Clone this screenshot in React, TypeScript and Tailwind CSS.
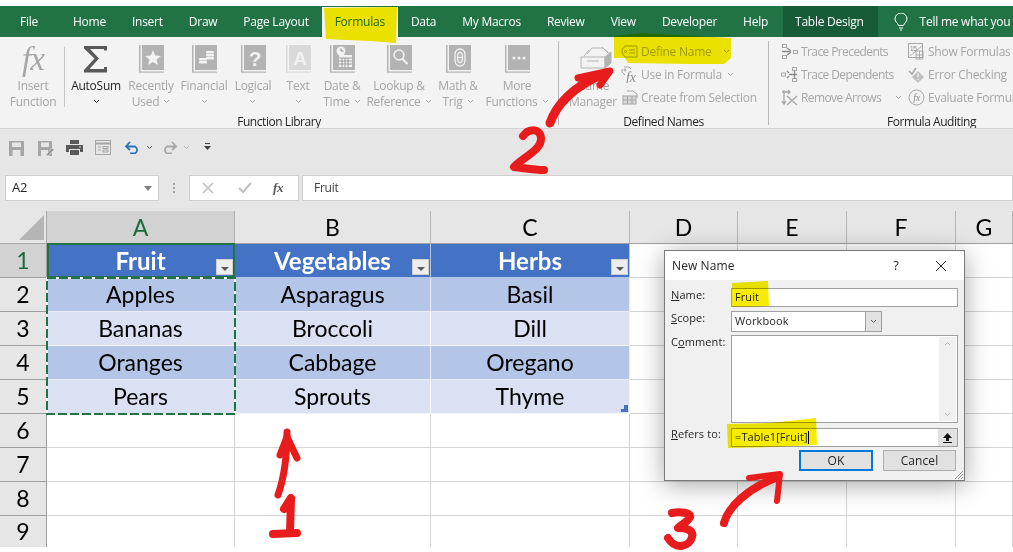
import React from "react";

const GRAY = "#a6a6a6";

function Caret({ className = "" }: { className?: string }) {
  return (
    <svg width="7" height="5" viewBox="0 0 7 5" fill="none" stroke="currentColor" strokeWidth="1" className={`inline-block ${className}`}>
      <path d="M1 1l2.5 2.5L6 1" />
    </svg>
  );
}

function Book({ children, light = false }: { children?: React.ReactNode; light?: boolean }) {
  const c = light ? "#d9d9d9" : "#b3b3b3";
  return (
    <svg width="25" height="29" viewBox="0 0 25 29">
      <rect x="0" y="0" width="1.5" height="27" fill={c} />
      <rect x="3" y="0" width="22" height="25" fill={c} />
      <rect x="0" y="26.5" width="25" height="1.2" fill={c} />
      {children}
    </svg>
  );
}

function Sigma() {
  return (
    <svg width="26" height="28" viewBox="0 0 26 28">
      <path d="M1 1h23v4.500h-3V4H7l9 9.500L6.500 24H21v-2h3v5.500H1v-2.500l10.500-11.500L1 3.500z" fill="#595959" />
    </svg>
  );
}

const star = <polygon points="14,5 16.200,10.500 22,11 17.500,14.500 19,20 14,17 9,20 10.500,14.500 6,11 11.800,10.500" fill="#f2f2f2" />;
const coins = (
  <g fill="#f2f2f2">
    <rect x="14" y="6" width="8" height="2.500" rx="1" />
    <rect x="14" y="9" width="8" height="2.500" rx="1" />
    <rect x="14" y="12" width="8" height="2.500" rx="1" />
    <rect x="7" y="13" width="8" height="2.500" rx="1" />
    <rect x="7" y="16" width="8" height="2.500" rx="1" />
  </g>
);
const question = <text x="14" y="21" textAnchor="middle" fontSize="21" fontWeight="700" fontFamily="Liberation Sans" fill="#f2f2f2">?</text>;
const letterA = <text x="14" y="20" textAnchor="middle" fontSize="19" fontWeight="700" fontFamily="Liberation Sans" fill="#f2f2f2">A</text>;
const calendar = (
  <g>
    <circle cx="11" cy="6" r="4.500" fill="#f2f2f2" />
    <path d="M11 3.500V6h2.500" stroke="#8c8c8c" fill="none" />
    <rect x="9" y="10" width="13" height="12" fill="#f2f2f2" />
    <path d="M9 13h13M9 16h13M9 19h13M12 13v9M15 13v9M18 13v9" stroke="#8c8c8c" strokeWidth="0.800" />
  </g>
);
const lens = (
  <g fill="none" stroke="#f2f2f2">
    <circle cx="12" cy="10" r="5" strokeWidth="1.500" />
    <path d="M15.500 14l5 5" strokeWidth="2" />
  </g>
);
const theta = (
  <g fill="none" stroke="#f2f2f2" strokeWidth="1.300">
    <rect x="9" y="4" width="10" height="17" rx="5" />
    <ellipse cx="14" cy="12.500" rx="2.500" ry="5" />
    <path d="M11.500 12.500h5" />
  </g>
);
const dots = (
  <g fill="#f2f2f2">
    <circle cx="9" cy="13" r="1.500" />
    <circle cx="14" cy="13" r="1.500" />
    <circle cx="19" cy="13" r="1.500" />
  </g>
);

function BigButton({ icon, line1, line2, caret, className, dark }: { icon: React.ReactNode; line1: string; line2?: string; caret?: boolean; className: string; dark?: boolean }) {
  return (
    <div className={`flex flex-col items-center shrink-0 ${className} ${dark ? "text-[#262626]" : "text-[#a6a6a6]"}`}>
      <div className="h-[33px] flex items-start justify-center">{icon}</div>
      <div className="whitespace-nowrap leading-[15.500px] text-center">
        <div>{line1}</div>
        <div className="flex items-center justify-center gap-[4px] h-[15.500px]">
          {line2 && <span>{line2}</span>}
          {caret && <Caret className="mt-[1px]" />}
        </div>
      </div>
    </div>
  );
}

function SmallButton({ icon, label, caret, gap = "gap-[3px]" }: { icon: React.ReactNode; label: string; caret?: React.ReactNode; gap?: string }) {
  return (
    <div className={`h-[23px] flex items-center whitespace-nowrap text-[#a6a6a6] ${gap}`}>
      <span className="w-[17px] h-[17px] flex items-center justify-center shrink-0">{icon}</span>
      <span>{label}</span>
      {caret}
    </div>
  );
}

const ic = { fill: "none", stroke: GRAY, strokeWidth: 1 };

const defineIcon = (
  <svg width="17" height="13" viewBox="0 0 17 13" {...ic}>
    <path d="M4 1h12v11H4L1 8V5z" />
    <circle cx="4.500" cy="6.500" r="1" />
    <path d="M8 5h6M8 8h6" />
  </svg>
);
const useIcon = (
  <svg width="17" height="17" viewBox="0 0 17 17" fill="none">
    <path d="M3 1h5l2 2M1 3v3l3 3" stroke={GRAY} />
    <circle cx="4" cy="4" r="1" stroke={GRAY} />
    <text x="5" y="16" fontSize="14" fontStyle="italic" fontFamily="Liberation Serif" fill="#8c8c8c">fx</text>
  </svg>
);
const createIcon = (
  <svg width="16" height="15" viewBox="0 0 16 15" {...ic}>
    <path d="M5 1h6l4 3v4" />
    <rect x="1" y="6" width="13" height="8" fill="#d9d9d9" />
    <path d="M1 10h13M5.500 6v8M10 6v8" />
  </svg>
);
const precedentsIcon = (
  <svg width="17" height="17" viewBox="0 0 17 17" {...ic}>
    <rect x="1.500" y="1.500" width="4" height="3" />
    <rect x="1.500" y="12.500" width="4" height="3" />
    <rect x="12.500" y="7.500" width="4" height="3" />
    <path d="M1 8.500h8M6 5l4 3M6 12l4-3" stroke="#8c8c8c" strokeWidth="1.300" />
  </svg>
);
const dependentsIcon = (
  <svg width="17" height="17" viewBox="0 0 17 17" {...ic}>
    <rect x="11.500" y="1.500" width="4" height="3" />
    <rect x="11.500" y="12.500" width="4" height="3" />
    <rect x="0.500" y="7" width="4" height="3" />
    <path d="M8 8.500h8M13.500 5v8M6 5l2 2M6 12l2-2" stroke="#8c8c8c" strokeWidth="1.300" />
  </svg>
);
const removeIcon = (
  <svg width="17" height="17" viewBox="0 0 17 17" fill="none" stroke={GRAY} strokeWidth="1.300">
    <path d="M3 1v13M1 12l2 3 2-3M1 3h8M7 1l2 2-2 2" />
    <path d="M6 7l10 9M16 7L6 16" />
  </svg>
);
const showIcon = (
  <svg width="17" height="17" viewBox="0 0 17 17" fill="none" stroke={GRAY}>
    <rect x="0.500" y="0.500" width="14" height="14" />
    <path d="M2 13L15 2M8 8h7v8H8zM8 12h7M11.500 8v8" strokeWidth="0.900" />
    <text x="2" y="7.500" fontSize="6.500" stroke="none" fill="#8c8c8c" fontFamily="Liberation Sans">15</text>
  </svg>
);
const errorIcon = (
  <svg width="17" height="16" viewBox="0 0 17 16" fill="none">
    <path d="M1 4l3 3 4-6" stroke={GRAY} strokeWidth="1.500" />
    <path d="M10 4l6 6-6 6-6-6z" fill="#bfbfbf" />
    <path d="M10 6.500v4M10 12v1.200" stroke="#f3f3f3" strokeWidth="1.300" />
  </svg>
);
const evalIcon = (
  <svg width="17" height="17" viewBox="0 0 17 17" fill="none">
    <circle cx="8.500" cy="8.500" r="7.500" stroke={GRAY} />
    <text x="8.500" y="12" textAnchor="middle" fontSize="10" fontStyle="italic" fontFamily="Liberation Serif" fill="#8c8c8c">fx</text>
  </svg>
);
const managerIcon = (
  <svg width="32" height="24" viewBox="0 0 32 24" fill="none" stroke="#b3b3b3">
    <path d="M7 8l5-6h11l5 5M4 10l5-6M22 1l8 7" />
    <path d="M1 11h24v11H1z" fill="#f3f3f3" />
    <path d="M7 15h12" />
    <path d="M25 11l6-5v11l-6 5z" fill="#b3b3b3" />
  </svg>
);

function Ribbon() {
  return (
    <div className="h-[92px] bg-[#f3f3f3] border-b border-[#d2d2d2] flex overflow-hidden text-[12px] shrink-0">
      <div className="w-[558px] shrink-0 flex flex-col">
        <div className="h-[77px] pt-[8px] pl-[3px] flex">
          <BigButton
            className="w-[60px]"
            icon={<span className="font-['Liberation_Serif'] italic text-[33px] leading-[29px] text-[#a6a6a6] tracking-[-1px]">fx</span>}
            line1="Insert"
            line2="Function"
          />
          <div className="w-[3px] flex justify-center shrink-0 mt-[2px] h-[60px]">
            <div className="w-px h-full bg-[#c6c6c6]" />
          </div>
          <BigButton dark className="w-[60px]" icon={<Sigma />} line1="AutoSum" caret />
          <BigButton className="w-[50px]" icon={<Book>{star}</Book>} line1="Recently" line2="Used" caret />
          <BigButton className="w-[56px]" icon={<Book>{coins}</Book>} line1="Financial" caret />
          <BigButton className="w-[42px]" icon={<Book>{question}</Book>} line1="Logical" caret />
          <BigButton className="w-[48px]" icon={<Book light>{letterA}</Book>} line1="Text" caret />
          <BigButton className="w-[40px]" icon={<Book>{calendar}</Book>} line1="Date &" line2="Time" caret />
          <BigButton className="w-[74px]" icon={<Book>{lens}</Book>} line1="Lookup &" line2="Reference" caret />
          <BigButton className="w-[44px]" icon={<Book>{theta}</Book>} line1="Math &" line2="Trig" caret />
          <BigButton className="w-[74px]" icon={<Book>{dots}</Book>} line1="More" line2="Functions" caret />
        </div>
        <div className="h-[14px] leading-[15px] text-center text-[#262626] tracking-[-0.45px]">Function Library</div>
      </div>
      <div className="w-px h-[84px] mt-[4px] bg-[#b8b8b8] shrink-0" />
      <div className="w-[209px] shrink-0 flex flex-col">
        <div className="h-[77px] pt-[3px] flex">
          <div className="ml-[9px] w-[50px] pt-[7px] flex flex-col items-center text-[#a6a6a6] shrink-0">
            <div className="h-[29px] flex items-start pl-[5px] -mt-[1px]">{managerIcon}</div>
            <div className="leading-[15.500px] whitespace-nowrap text-center pt-[3px]">
              <div>Name</div>
              <div>Manager</div>
            </div>
          </div>
          <div className="ml-[3px] flex flex-col">
            <SmallButton icon={defineIcon} label="Define Name" caret={<Caret className="ml-[8px]" />} />
            <SmallButton icon={useIcon} label="Use in Formula" caret={<Caret className="ml-[2px]" />} />
            <SmallButton icon={createIcon} label="Create from Selection" />
          </div>
        </div>
        <div className="h-[14px] leading-[15px] text-center text-[#262626] tracking-[-0.45px]">Defined Names</div>
      </div>
      <div className="w-px h-[84px] mt-[4px] bg-[#b8b8b8] shrink-0" />
      <div className="w-[325px] shrink-0 flex flex-col">
        <div className="h-[77px] pt-[3px] pl-[12px] flex">
          <div className="w-[127px] shrink-0 flex flex-col tracking-[-0.6px]">
            <SmallButton icon={precedentsIcon} label="Trace Precedents" />
            <SmallButton icon={dependentsIcon} label="Trace Dependents" />
            <SmallButton icon={removeIcon} label="Remove Arrows" caret={<Caret className="ml-[11px]" />} />
          </div>
          <div className="flex flex-col">
            <SmallButton icon={showIcon} label="Show Formulas" />
            <SmallButton icon={errorIcon} label="Error Checking" />
            <SmallButton icon={evalIcon} label="Evaluate Formula" />
          </div>
        </div>
        <div className="h-[14px] leading-[15px] text-center text-[#262626] tracking-[-0.45px]">Formula Auditing</div>
      </div>
    </div>
  );
}

function Tabs() {
  const tabs = ["Home", "Insert", "Draw", "Page Layout", "Formulas", "Data", "My Macros", "Review", "View", "Developer", "Help"];
  return (
    <div className="mt-[6px] h-[31px] bg-[#217346] flex items-center text-white text-[12px] pl-[20px] shrink-0 overflow-hidden whitespace-nowrap">
      <div className="h-full flex items-center mr-[22px]">File</div>
      {tabs.map((t) => (
        <div key={t} className={`h-full flex items-center px-[13px] ${t === "Formulas" ? "text-[#217346] bg-[#f3f3f3] mt-[1px]" : ""}`}>
          {t}
        </div>
      ))}
      <div className="ml-[2px] h-full flex items-center pl-[12px] pr-[14px] bg-[#185c37]">Table Design</div>
      <svg width="14" height="18" viewBox="0 0 14 18" fill="none" stroke="white" className="ml-[16px] shrink-0">
        <path d="M4.500 12.500C4 10 1 9 1 6a6 6 0 0 1 12 0c0 3-3 4-3.500 6.500z" />
        <path d="M5 15h4M6 17h2" />
      </svg>
      <span className="ml-[12px]">Tell me what you want to do</span>
    </div>
  );
}

function QuickAccess() {
  return (
    <div className="h-[36px] flex items-center pl-[9px] shrink-0">
      <svg width="15" height="15" viewBox="0 0 15 15" fill="#a6a6a6" className="mt-[2px]">
        <path d="M0 0h15v15H0z" />
        <path d="M3 1.500h9v4.500H3zM3.500 9h8v6h-8z" fill="#e6e6e6" />
      </svg>
      <svg width="16" height="15" viewBox="0 0 16 15" fill="#a6a6a6" className="ml-[14px] mt-[2px]">
        <path d="M0 0h14v15H0z" />
        <path d="M3 1.500h8v4.500H3zM3 9h7v6H3z" fill="#e6e6e6" />
        <path d="M8 14l6-7 2 1.500-6 6.500z" fill="#8c8c8c" stroke="#e6e6e6" strokeWidth="0.700" />
      </svg>
      <svg width="17" height="15" viewBox="0 0 17 15" fill="#595959" className="ml-[12px]">
        <path d="M4 0h9v4H4zM0 5h17v7h-3V9H3v3H0zM4 10h9v5H4z" />
        <circle cx="14" cy="7" r="0.800" fill="#e6e6e6" />
      </svg>
      <svg width="16" height="15" viewBox="0 0 16 15" fill="none" stroke="#a6a6a6" className="ml-[12px]">
        <rect x="0.500" y="0.500" width="15" height="14" />
        <path d="M1 3.500h14" strokeWidth="2" />
        <path d="M3 7h3M3 10h3M8 6.500h5v2H8zM8 10h5v2H8z" />
      </svg>
      <svg width="15" height="13" viewBox="0 0 15 13" fill="none" stroke="#2e75b6" strokeWidth="1.800" className="ml-[14px]">
        <path d="M1 5.500h9a4 4 0 0 1 0 7H5M5 1L1 5.500 5 9" />
      </svg>
      <Caret className="ml-[6px] text-[#595959]" />
      <svg width="15" height="13" viewBox="0 0 15 13" fill="none" stroke="#a6a6a6" strokeWidth="1.800" className="ml-[9px]">
        <path d="M14 5.500H5a4 4 0 0 0 0 7h5M10 1l4 4.500L10 9" />
      </svg>
      <Caret className="ml-[6px] text-[#b3b3b3]" />
      <svg width="7" height="8" viewBox="0 0 7 8" className="ml-[14px]" fill="#404040">
        <path d="M1 0h5v1H1zM0 3h7L3.500 7z" />
      </svg>
    </div>
  );
}

function FormulaBar() {
  return (
    <div className="h-[26px] mt-[10px] flex pl-[5px] shrink-0 font-['Liberation_Sans'] text-[12px]">
      <div className="w-[154px] bg-white border border-[#cfcfcf] flex items-center justify-between pl-[6px] pr-[6px] text-[#262626] font-['Open_Sans'] text-[13px]">
        <span>A2</span>
        <span className="w-0 h-0 border-l-[4px] border-r-[4px] border-t-[5px] border-l-transparent border-r-transparent border-t-[#7f7f7f]" />
      </div>
      <div className="w-[30px] flex flex-col gap-[2px] items-center justify-center">
        <span className="w-[2px] h-[2px] bg-[#a6a6a6]" />
        <span className="w-[2px] h-[2px] bg-[#a6a6a6]" />
        <span className="w-[2px] h-[2px] bg-[#a6a6a6]" />
      </div>
      <div className="w-[110px] bg-white border border-[#cfcfcf] flex items-center">
        <svg width="12" height="12" viewBox="0 0 12 12" stroke="#bfbfbf" strokeWidth="1.500" className="ml-[12px]">
          <path d="M1 1l10 10M11 1L1 11" />
        </svg>
        <svg width="14" height="12" viewBox="0 0 14 12" fill="none" stroke="#bfbfbf" strokeWidth="2" className="ml-[24px]">
          <path d="M1 6l4 4 8-9" />
        </svg>
        <span className="ml-[21px] font-['Liberation_Serif'] italic text-[13px] font-bold text-[#595959]">fx</span>
      </div>
      <div className="ml-[3px] flex-1 bg-white border border-[#cfcfcf] flex items-center pl-[11px] text-[#404040] font-['Open_Sans']">Fruit</div>
    </div>
  );
}

function Dropdown() {
  return (
    <div className="absolute right-[1px] bottom-[2px] w-[17px] h-[16px] bg-[#ededed] border border-[#cfcfcf] flex items-center justify-center">
      <span className="mt-[3px] w-0 h-0 border-l-[4px] border-r-[4px] border-t-[4px] border-l-transparent border-r-transparent border-t-[#595959]" />
    </div>
  );
}

const rows = [
  ["Apples", "Asparagus", "Basil"],
  ["Bananas", "Broccoli", "Dill"],
  ["Oranges", "Cabbage", "Oregano"],
  ["Pears", "Sprouts", "Thyme"],
];

function Sheet() {
  const colHeaders = ["A", "B", "C", "D", "E", "F", "G"];
  const head = ["Fruit", "Vegetables", "Herbs"];
  const empties = Array.from({ length: 7 });
  return (
    <div className="relative bg-white font-['Lato'] text-[23px] text-black tracking-normal">
      <div className="grid grid-cols-[47px_188px_196px_199px_108px_109px_109px_57px] grid-rows-[33px_34px_34px_34px_34px_34px_34px_34px_34px_31px] overflow-hidden">
        <div className="bg-[#e6e6e6] border-r border-b border-[#a9a9a9] flex items-end justify-end pr-[2px] pb-[3px]">
          <svg width="25" height="25" viewBox="0 0 25 25">
            <path d="M25 0v25H0z" fill="#b5b5b5" />
          </svg>
        </div>
        {colHeaders.map((c, i) => (
          <div key={c} className={`flex items-center justify-center border-b border-[#9f9f9f] border-r ${i === 0 ? "bg-[#d2d2d2] text-[#1a6b40] border-r-[#b0b0b0]" : "bg-[#e6e6e6] border-r-[#b5b5b5]"}`}>
            {c}
          </div>
        ))}
        <div className="bg-[#d2d2d2] border-r border-b border-[#9f9f9f] text-[#1a6b40] flex items-center justify-center">1</div>
        {head.map((h, i) => (
          <div key={h} className="relative bg-[#4472c4] text-white font-bold text-[24px] flex items-center justify-center border-r border-b border-white/60">
            {h}
            <Dropdown />
            {i === 0 && (
              <>
                <div className="absolute -top-[1px] -bottom-[1px] left-0 -right-[1px] border-2 border-[#217346]" />
                <div className="absolute -right-[3px] -bottom-[3px] w-[5px] h-[5px] bg-[#217346]" />
              </>
            )}
          </div>
        ))}
        {empties.slice(0, 4).map((_, i) => (
          <div key={i} className="border-r border-b border-[#d4d4d4]" />
        ))}
        {rows.map((r, ri) => (
          <React.Fragment key={r[0]}>
            <div className="bg-[#e6e6e6] border-r border-b border-[#9f9f9f] flex items-center justify-center">{ri + 2}</div>
            {r.map((v, ci) => (
              <div key={v} className={`relative flex items-center justify-center border-r border-b border-white/70 ${ri % 2 === 0 ? "bg-[#b4c6e7]" : "bg-[#d9e1f2]"}`}>
                {v}
                {ri === 3 && ci === 2 && (
                  <svg width="7" height="7" viewBox="0 0 7 7" className="absolute right-[1px] bottom-[1px]">
                    <path d="M7 0v7H0V4h3V0z" fill="#4472c4" />
                  </svg>
                )}
              </div>
            ))}
            {empties.slice(0, 4).map((_, i) => (
              <div key={i} className="border-r border-b border-[#d4d4d4]" />
            ))}
          </React.Fragment>
        ))}
        {[6, 7, 8, 9].map((n) => (
          <React.Fragment key={n}>
            <div className={`bg-[#e6e6e6] border-r border-[#9f9f9f] flex items-center justify-center ${n === 9 ? "" : "border-b"}`}>{n}</div>
            {empties.map((_, i) => (
              <div key={i} className={`border-r border-[#d4d4d4] ${n === 9 ? "" : "border-b"}`} />
            ))}
          </React.Fragment>
        ))}
      </div>
      {/* copy marquee round A2:A5 */}
      <svg width="190" height="138" className="absolute left-[46px] top-[66px] pointer-events-none" fill="none">
        <rect x="1" y="1" width="188" height="136" stroke="white" strokeWidth="2" />
        <rect x="1" y="1" width="188" height="136" stroke="#217346" strokeWidth="2" strokeDasharray="9 3" />
      </svg>
    </div>
  );
}

function Dialog() {
  const label = "leading-[13px] text-[#262626]";
  return (
    <div className="absolute left-[664px] top-[250px] w-[301px] h-[231px] border border-[#7a7a7a] bg-[#f0f0f0] shadow-[0_4px_24px_rgba(0,0,0,0.35)] flex flex-col text-[11px] font-['Open_Sans'] text-[#262626] tracking-[0.1px]">
      <div className="h-[29px] bg-white flex items-center pl-[7px] text-[12px] shrink-0">
        <span>New Name</span>
        <span className="ml-auto text-[13px]">?</span>
        <svg width="12" height="12" viewBox="0 0 12 12" stroke="#262626" className="ml-[36px] mr-[17px]">
          <path d="M1 1l10 10M11 1L1 11" />
        </svg>
      </div>
      <div className="pt-[8px] pl-[6px] pr-[6px] grid grid-cols-[60px_1fr] grid-rows-[19px_21px_88px_20.500px] gap-y-[3.500px]">
        <div className={label}><span className="underline">N</span>ame:</div>
        <div className="bg-white border border-[#a0a0a0] pl-[3px] flex items-center">Fruit</div>
        <div className={label}><span className="underline">S</span>cope:</div>
        <div className="w-[151px] bg-white border border-[#a0a0a0] pl-[3px] flex items-center justify-between">
          <span>Workbook</span>
          <span className="w-[16px] h-full bg-[#e1e1e1] border-l border-[#a0a0a0] flex items-center justify-center text-[#595959]"><Caret /></span>
        </div>
        <div className={label}>C<span className="underline">o</span>mment:</div>
        <div className="bg-white border border-[#a0a0a0] flex justify-end p-[1px]">
          <div className="w-[17px] bg-[#f0f0f0] flex flex-col justify-between items-center py-[4px] text-[#b3b3b3]">
            <Caret className="rotate-180" />
            <Caret />
          </div>
        </div>
        <div className={label}><span className="underline">R</span>efers to:</div>
        <div className="mt-[1.500px] bg-white border border-[#a0a0a0] pl-[3px] flex items-center justify-between">
          <span className="flex items-center">=Table1[Fruit]<span className="w-px h-[13px] bg-black" /></span>
          <span className="w-[19px] h-full bg-[#e1e1e1] flex items-center justify-center">
            <svg width="11" height="11" viewBox="0 0 11 11" fill="#111">
              <path d="M5.500 1L10 6H7v3H4V6H1zM1 10h9v1H1z" />
            </svg>
          </span>
        </div>
      </div>
      <div className="mt-[3px] pr-[8px] flex justify-end gap-[10px] text-[12px]">
        <div className="w-[74px] h-[21px] bg-[#e1e1e1] border-2 border-[#0078d7] flex items-center justify-center">OK</div>
        <div className="w-[73px] h-[21px] bg-[#e1e1e1] border border-[#adadad] flex items-center justify-center">Cancel</div>
      </div>
      <svg width="11" height="11" viewBox="0 0 11 11" stroke="#9a9a9a" className="absolute right-0 bottom-0">
        <path d="M10 2L2 10M10 5l-5 5M10 8l-2 2" />
      </svg>
    </div>
  );
}

export default function App() {
  return (
    <div className="relative w-[1013px] h-[552px] overflow-hidden bg-white flex flex-col font-['Open_Sans',sans-serif] tracking-[-0.25px]">
      <Tabs />
      <Ribbon />
      <div className="h-[82px] bg-[#e6e6e6] flex flex-col shrink-0">
        <QuickAccess />
        <FormulaBar />
      </div>
      <Sheet />
      <Dialog />
      {/* yellow marker */}
      <svg width="1013" height="552" className="absolute inset-0 mix-blend-multiply pointer-events-none" fill="#f7ec00">
        <path d="M324 8L397 7L396 43L370 41L326 39Z" />
        <path d="M614 36L640 33L731 38L731 58L724 64L690 64L628 63L625 58L614 58Z" />
        <path d="M732 283L768 281L769 306L732 307Z" />
        <path d="M727 424L770 423L816 418L817 445L770 447L728 448Z" />
      </svg>
      {/* red pen */}
      <svg width="1013" height="552" className="absolute inset-0 pointer-events-none" fill="none" stroke="#e81c1c" strokeLinecap="round" strokeLinejoin="round">
        <path d="M550 123C556 106 572 86 606 73" strokeWidth="9" />
        <path d="M578 78L610 71L600 85" strokeWidth="7" />
        <path d="M523 136C528 129 540 127 541 138C542 150 522 158 514 167C524 168 534 170 544 170" strokeWidth="8" />
        <path d="M724 523C728 507 748 488 778 477" strokeWidth="8" />
        <path d="M749 478L780 474L777 501" strokeWidth="6" />
        <path d="M672 513C680 511 692 513 690 517C688 522 680 525 678 528C686 528 694 530 692 537C690 546 676 551 668 538" strokeWidth="8" />
        <path d="M278 495C284 478 287 460 287 432" strokeWidth="7" />
        <path d="M280 455L287 437L297 458" strokeWidth="7" />
        <path d="M291 498L284 509M291 499L290 533M273 534L297 533" strokeWidth="8" />
      </svg>
    </div>
  );
}
